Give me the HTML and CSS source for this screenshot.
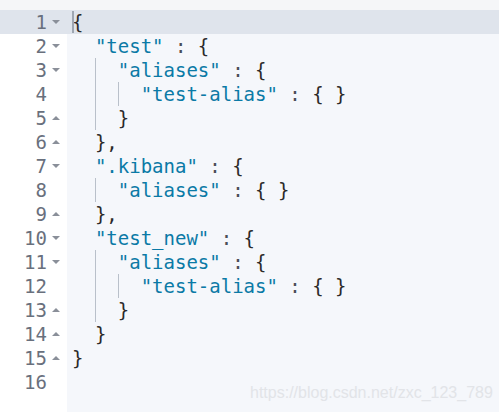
FILE: index.html
```html
<!DOCTYPE html>
<html>
<head>
<meta charset="utf-8">
<link rel="stylesheet" href="styles.css">
</head>
<body>
<div class="editor">
  <div class="topbar"></div>
  <div class="row active"><div class="gut"><span class="num">1</span><span class="fold down"></span></div><div class="code"><span class="cursor"></span><span class="p">{</span></div></div>
  <div class="row"><div class="gut"><span class="num">2</span><span class="fold down"></span></div><div class="code"><span class="ind"></span><span class="s">"test"</span><span class="c"> : </span><span class="p">{</span></div></div>
  <div class="row"><div class="gut"><span class="num">3</span><span class="fold down"></span></div><div class="code"><span class="ind"></span><span class="ind g"></span><span class="s">"aliases"</span><span class="c"> : </span><span class="p">{</span></div></div>
  <div class="row"><div class="gut"><span class="num">4</span><span class="fold"></span></div><div class="code"><span class="ind"></span><span class="ind g"></span><span class="ind g"></span><span class="s">"test-alias"</span><span class="c"> : </span><span class="p">{ }</span></div></div>
  <div class="row"><div class="gut"><span class="num">5</span><span class="fold up"></span></div><div class="code"><span class="ind"></span><span class="ind g"></span><span class="p">}</span></div></div>
  <div class="row"><div class="gut"><span class="num">6</span><span class="fold up"></span></div><div class="code"><span class="ind"></span><span class="p">},</span></div></div>
  <div class="row"><div class="gut"><span class="num">7</span><span class="fold down"></span></div><div class="code"><span class="ind"></span><span class="s">".kibana"</span><span class="c"> : </span><span class="p">{</span></div></div>
  <div class="row"><div class="gut"><span class="num">8</span><span class="fold"></span></div><div class="code"><span class="ind"></span><span class="ind g"></span><span class="s">"aliases"</span><span class="c"> : </span><span class="p">{ }</span></div></div>
  <div class="row"><div class="gut"><span class="num">9</span><span class="fold up"></span></div><div class="code"><span class="ind"></span><span class="p">},</span></div></div>
  <div class="row"><div class="gut"><span class="num">10</span><span class="fold down"></span></div><div class="code"><span class="ind"></span><span class="s">"test_new"</span><span class="c"> : </span><span class="p">{</span></div></div>
  <div class="row"><div class="gut"><span class="num">11</span><span class="fold down"></span></div><div class="code"><span class="ind"></span><span class="ind g"></span><span class="s">"aliases"</span><span class="c"> : </span><span class="p">{</span></div></div>
  <div class="row"><div class="gut"><span class="num">12</span><span class="fold"></span></div><div class="code"><span class="ind"></span><span class="ind g"></span><span class="ind g"></span><span class="s">"test-alias"</span><span class="c"> : </span><span class="p">{ }</span></div></div>
  <div class="row"><div class="gut"><span class="num">13</span><span class="fold up"></span></div><div class="code"><span class="ind"></span><span class="ind g"></span><span class="p">}</span></div></div>
  <div class="row"><div class="gut"><span class="num">14</span><span class="fold up"></span></div><div class="code"><span class="ind"></span><span class="p">}</span></div></div>
  <div class="row"><div class="gut"><span class="num">15</span><span class="fold up"></span></div><div class="code"><span class="p">}</span></div></div>
  <div class="row"><div class="gut"><span class="num">16</span><span class="fold"></span></div><div class="code"></div></div>
  <div class="row filler"><div class="gut"></div><div class="code"></div></div>
  <div class="watermark">https://blog.csdn.net/zxc_123_789</div>
</div>
</body>
</html>
```

FILE: styles.css
```css
html, body {
  margin: 0;
  padding: 0;
  height: 100%;
  overflow: hidden;
  background: #f5f7fa;
}

.editor {
  position: relative;
  display: flex;
  flex-direction: column;
  height: 412px;
  font-family: "DejaVu Sans Mono", monospace;
  font-size: 19px;
  line-height: 24px;
}

.topbar {
  height: 10px;
  background: #f5f6f8;
  flex: none;
}

.row {
  display: grid;
  grid-template-columns: 67px 1fr;
  height: 24px;
  flex: none;
}

.row.filler {
  flex: 1;
  height: auto;
}

.gut {
  background: #ffffff;
  display: flex;
  align-items: center;
  justify-content: flex-end;
  color: #69707d;
}

.num {
  text-align: right;
}

.fold {
  width: 20px;
  height: 24px;
  position: relative;
  flex: none;
}

.fold.down::after,
.fold.up::after {
  content: "";
  position: absolute;
  left: 5px;
  top: 10px;
  border-left: 4px solid transparent;
  border-right: 4px solid transparent;
}

.fold.down::after {
  border-top: 4px solid #8a8f99;
}

.fold.up::after {
  border-bottom: 4px solid #8a8f99;
}

.code {
  position: relative;
  background: #f5f7fb;
  padding-left: 5px;
  white-space: pre;
  display: flex;
  align-items: stretch;
  color: #343741;
}

.row.active .gut,
.row.active .code {
  background: #dfe4ec;
}

.cursor {
  position: absolute;
  left: 5px;
  top: 1px;
  width: 2px;
  height: 22px;
  background: #9ea6b1;
}

.ind {
  display: inline-block;
  width: 2ch;
  height: 24px;
  box-sizing: border-box;
}

.ind.g {
  border-left: 1px solid #b9c0ca;
}

.s {
  color: #0b7aa6;
}

.c {
  color: #4a4e57;
}

.p {
  color: #2b2a2a;
}

.watermark {
  position: absolute;
  left: 250px;
  top: 384px;
  font-family: "Liberation Sans", Arial, sans-serif;
  font-size: 16px;
  line-height: 18px;
  color: #e2e4e8;
  white-space: nowrap;
}
```
